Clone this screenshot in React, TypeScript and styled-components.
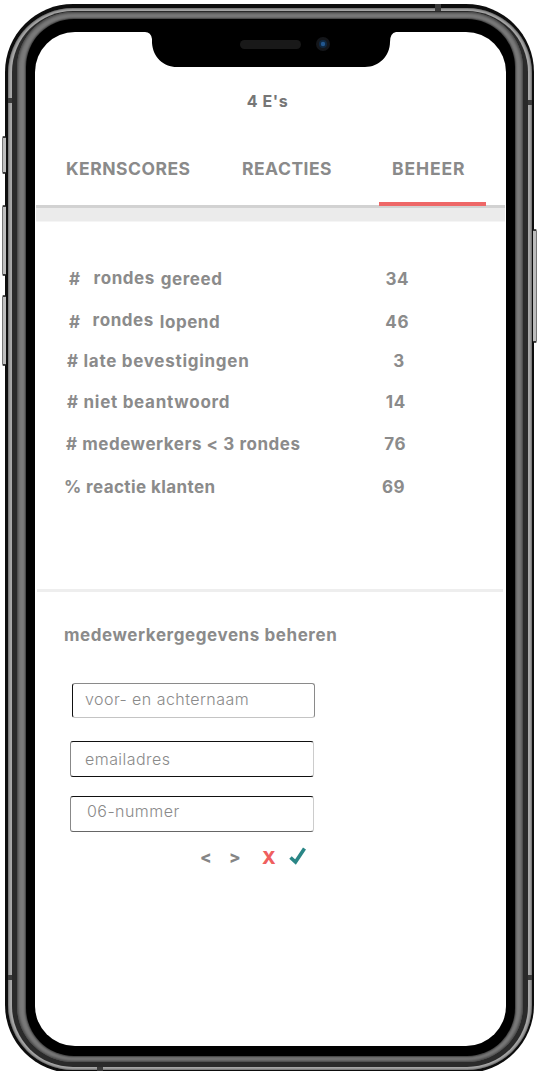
import React from "react";
import styled, { createGlobalStyle } from "styled-components";

const Global = createGlobalStyle`
  html, body { margin: 0; padding: 0; background: #fff; }
  body { width: 539px; height: 1071px; overflow: hidden; font-family: Inter, "Liberation Sans", sans-serif; }
`;

const Stage = styled.div`
  position: relative;
  width: 539px;
  height: 1071px;
  overflow: hidden;
  padding: 4px 5px 0 5px;
  box-sizing: border-box;
`;

const Ring = styled.div<{ $pad: string; $radius: number; $bg: string; $h?: number; $shade?: string }>`
  box-sizing: border-box;
  padding: ${(p) => p.$pad};
  border-radius: ${(p) => p.$radius}px;
  background: ${(p) => p.$bg};
  ${(p) => (p.$shade ? `box-shadow: ${p.$shade};` : "")}
  ${(p) => (p.$h ? `height: ${p.$h}px;` : "height: 100%;")}
`;

const Screen = styled.main`
  position: relative;
  height: 100%;
  border-radius: 40px;
  background: #fff;
  overflow: hidden;
  display: flex;
  flex-direction: column;
`;

const SideButton = styled.div<{ $side: "left" | "right"; $top: number; $h: number }>`
  position: absolute;
  ${(p) => p.$side}: 2px;
  top: ${(p) => p.$top}px;
  width: 4px;
  height: ${(p) => p.$h}px;
  box-sizing: border-box;
  background: #bdbdbd;
  border-radius: 2px;
  border-${(p) => (p.$side === "left" ? "left" : "right")}: 1px solid #777;
  border-top: 2px solid #333;
  border-bottom: 2px solid #333;
`;

const Band = styled.div<{ $x: number; $y: number; $w: number; $h: number }>`
  position: absolute;
  left: ${(p) => p.$x}px;
  top: ${(p) => p.$y}px;
  width: ${(p) => p.$w}px;
  height: ${(p) => p.$h}px;
  background: #3a3a3a;
`;

const Notch = styled.svg`
  position: absolute;
  left: 145px;
  top: 32px;
`;

const Title = styled.h1`
  margin: 59px 0 0;
  height: 20px;
  text-align: center;
  font-size: 16px;
  line-height: 20px;
  font-weight: 700;
  color: #767676;
  letter-spacing: 0.6px;
  padding-right: 6px;
`;

const Tabs = styled.nav`
  position: relative;
  height: 47px;
  margin-top: 47px;
  display: flex;
  align-items: flex-start;
`;

const Tab = styled.span<{ $w: number; $pl: number; $ls: number }>`
  width: ${(p) => p.$w}px;
  padding-left: ${(p) => p.$pl}px;
  box-sizing: border-box;
  font-size: 17.5px;
  line-height: 22px;
  font-weight: 700;
  color: #8a8a8a;
  letter-spacing: ${(p) => p.$ls}px;
  white-space: nowrap;
`;

const ActiveLine = styled.div`
  position: absolute;
  left: 344px;
  top: 44px;
  width: 107px;
  height: 4px;
  background: #ee6767;
`;

const TabRule = styled.div`
  height: 3px;
  margin: 0 1px;
  background: #d2d2d2;
`;

const Band2 = styled.div`
  height: 13px;
  margin: 0 1px;
  background: #ebebeb;
  border-bottom: 1px solid #f5f5f5;
`;

const Stats = styled.section`
  display: flex;
  flex-direction: column;
  margin-top: 35px;
`;

const StatRow = styled.div<{ $h: number; $left: number; $valRight: number; $ls: number }>`
  height: ${(p) => p.$h}px;
  padding-left: ${(p) => p.$left}px;
  padding-right: ${(p) => p.$valRight}px;
  display: flex;
  align-items: center;
  justify-content: space-between;
  font-size: 17px;
  line-height: 20px;
  font-weight: 700;
  letter-spacing: ${(p) => p.$ls}px;
  color: #8b8b8b;
  white-space: nowrap;
`;

const Label = styled.span`
  display: flex;
  align-items: center;
`;

const Word = styled.span<{ $gap?: number; $lift?: number }>`
  margin-left: ${(p) => p.$gap ?? 0}px;
  margin-bottom: ${(p) => p.$lift ?? 0}px;
`;

const Divider = styled.hr`
  border: 0;
  height: 3px;
  margin: 80px 3px 0 2px;
  background: #eeeeee;
`;

const Heading = styled.h2`
  margin: 33px 0 0 29px;
  font-size: 17px;
  line-height: 20px;
  font-weight: 700;
  letter-spacing: 0.58px;
  color: #8b8b8b;
  white-space: nowrap;
`;

const Form = styled.form`
  display: flex;
  flex-direction: column;
  margin-top: 38px;
`;

const Field = styled.input<{
  $ml: number;
  $w: number;
  $h: number;
  $mt: number;
  $pl: number;
  $pb: number;
  $t: string;
  $r: string;
  $b: string;
  $l: string;
}>`
  box-sizing: border-box;
  display: block;
  margin: ${(p) => p.$mt}px 0 0 ${(p) => p.$ml}px;
  width: ${(p) => p.$w}px;
  height: ${(p) => p.$h}px;
  padding: 0 0 ${(p) => p.$pb}px ${(p) => p.$pl}px;
  border-style: solid;
  border-width: 1px;
  border-color: ${(p) => `${p.$t} ${p.$r} ${p.$b} ${p.$l}`};
  border-radius: 3px;
  background: #fff;
  outline: none;
  font-family: Inter, "Liberation Sans", sans-serif;
  font-size: 16px;
  font-weight: 300;
  letter-spacing: 0.45px;
  &::placeholder { color: #8a8a8a; opacity: 1; }
`;

const Actions = styled.div`
  display: flex;
  align-items: center;
  height: 24px;
  margin: 13px 0 0 165px;
`;

const Arrow = styled.button<{ $w: number }>`
  width: ${(p) => p.$w}px;
  padding: 0;
  border: 0;
  background: none;
  text-align: left;
  font-family: Inter, "Liberation Sans", sans-serif;
  font-size: 17px;
  font-weight: 800;
  color: #858585;
`;

const Cancel = styled(Arrow)`
  color: #ef5f5f;
  font-size: 18px;
`;

const Confirm = styled.svg`
  display: block;
  margin-top: -3px;
`;

const stats = [
  { h: 43, left: 34, right: 97, ls: 0.55, val: "34", label: <><Word>#</Word><Word $gap={13} $lift={2}>rondes</Word><Word $gap={6}>gereed</Word></> },
  { h: 43, left: 34, right: 97, ls: 0.55, val: "46", label: <><Word>#</Word><Word $gap={12} $lift={3}>rondes</Word><Word $gap={6}>lopend</Word></> },
  { h: 36, left: 32, right: 101, ls: 0.72, val: "3", label: <Word>{"# late bevestigingen"}</Word> },
  { h: 45, left: 32, right: 100, ls: 0.72, val: "14", label: <Word>{"# niet beantwoord"}</Word> },
  { h: 40, left: 31, right: 100, ls: 0.55, val: "76", label: <Word>{"# medewerkers < 3 rondes"}</Word> },
  { h: 45, left: 29, right: 101, ls: 0.4, val: "69", label: <Word>{"% reactie klanten"}</Word> },
];

export default function App() {
  return (
    <Stage>
      <Global />
      <SideButton $side="left" $top={136} $h={38} />
      <SideButton $side="left" $top={205} $h={71} />
      <SideButton $side="left" $top={295} $h={71} />
      <SideButton $side="right" $top={229} $h={114} />
      <Ring $h={1069} $radius={68} $bg="#0d0d0d" $pad="4px 2px 3px 3px">
        <Ring $radius={65} $bg="#a9a9a9" $pad="3px 4px 3px 4px" $shade="inset 0 0 3px 0 #2a2a2a">
          <Ring $radius={61} $bg="#2a2a2a" $pad="1px 5px 5px 5px">
            <Ring $radius={56} $bg="#7a7a7a" $pad="7px 8px 6px 9px" $shade="inset 0 0 3px 1px #3c3c3c">
              <Ring $radius={48} $bg="#000000" $pad="13px 9px 10px 9px" $shade="0 0 2px 1px #3a3a3a">
                <Screen>
                  <Title>4 E's</Title>
                  <Tabs>
                    <Tab $w={207} $pl={31} $ls={0.5}>KERNSCORES</Tab>
                    <Tab $w={150} $pl={0} $ls={0.5}>REACTIES</Tab>
                    <Tab $w={114} $pl={0} $ls={0.9}>BEHEER</Tab>
                    <ActiveLine />
                  </Tabs>
                  <TabRule />
                  <Band2 />
                  <Stats>
                    {stats.map((s) => (
                      <StatRow key={s.val} $h={s.h} $left={s.left} $valRight={s.right} $ls={s.ls}>
                        <Label>{s.label}</Label>
                        <span>{s.val}</span>
                      </StatRow>
                    ))}
                  </Stats>
                  <Divider />
                  <Heading>medewerkergegevens beheren</Heading>
                  <Form>
                    <Field $mt={0} $ml={37} $w={243} $h={35} $pl={12} $pb={3} $t="#8a8a8a" $r="#8a8a8a" $b="#c4c4c4" $l="#111" placeholder="voor- en achternaam" />
                    <Field $mt={23} $ml={35} $w={244} $h={36} $pl={14} $pb={1} $t="#111" $r="#ccc" $b="#111" $l="#888" placeholder="emailadres" />
                    <Field $mt={19} $ml={35} $w={244} $h={36} $pl={16} $pb={7} $t="#111" $r="#ccc" $b="#666" $l="#888" placeholder="06-nummer" />
                    <Actions>
                      <Arrow type="button" $w={29}>&lt;</Arrow>
                      <Arrow type="button" $w={33}>&gt;</Arrow>
                      <Cancel type="button" $w={27}>X</Cancel>
                      <Confirm width="18" height="18" viewBox="0 0 18 18">
                        <path d="M1.5 10.5 L6.5 15 L15.5 1.5" fill="none" stroke="#2a8686" strokeWidth="3.6" />
                      </Confirm>
                    </Actions>
                  </Form>
                </Screen>
              </Ring>
            </Ring>
          </Ring>
        </Ring>
      </Ring>
      <Band $x={435} $y={4} $w={6} $h={7} />
      <Band $x={8} $y={98} $w={4} $h={5} />
      <Band $x={528} $y={100} $w={4} $h={5} />
      <Band $x={8} $y={975} $w={4} $h={5} />
      <Band $x={528} $y={975} $w={4} $h={5} />
      <Band $x={97} $y={1067} $w={6} $h={4} />
      <Notch width="252" height="36" viewBox="0 0 252 36">
        <path d="M0 0 Q6 0 7 7 L7 11 C8 25 18 35 32 35 L220 35 C234 35 245 24 245 10 Q245 1 251 0 Z" fill="#000" />
        <rect x="95" y="8" width="61" height="9" rx="4.5" fill="#191919" />
        <circle cx="178" cy="12" r="7" fill="#14161a" />
        <circle cx="178" cy="12" r="4" fill="#0f2740" />
        <circle cx="178" cy="12" r="2.2" fill="#22578f" />
      </Notch>
    </Stage>
  );
}
